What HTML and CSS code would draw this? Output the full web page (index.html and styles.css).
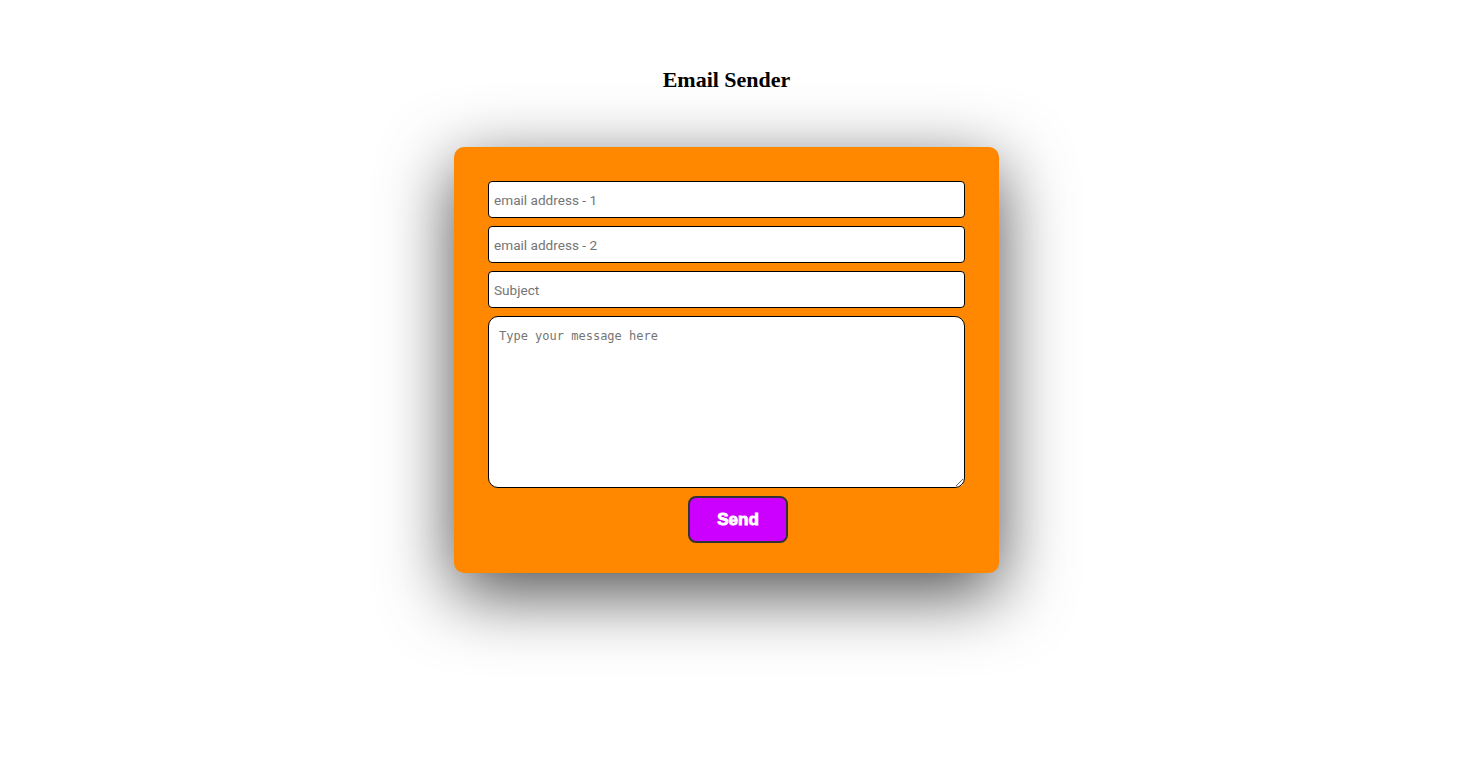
FILE: index.html
```html
<!DOCTYPE html>
<html>
<head>
<meta charset="utf-8">
<title>Email Sender</title>
<link rel="stylesheet" href="styles.css">
</head>
<body>
<div class="page">
  <h2 class="title">Email Sender</h2>
  <form class="card">
    <input class="field" type="text" placeholder="email address - 1">
    <input class="field" type="text" placeholder="email address - 2">
    <input class="field" type="text" placeholder="Subject">
    <textarea class="message" placeholder="Type your message here"></textarea>
    <button class="send" type="button">Send</button>
  </form>
</div>
</body>
</html>
```
FILE: styles.css
```css
html, body {
  margin: 0;
  padding: 0;
  background: #ffffff;
}
.page {
  width: 1453px;
  min-height: 767px;
  box-sizing: border-box;
  display: flex;
  flex-direction: column;
  align-items: center;
  padding-top: 66px;
}
.title {
  margin: 0 0 54px 0;
  font-family: "Liberation Serif", "Times New Roman", serif;
  font-weight: bold;
  font-size: 22px;
  line-height: 27px;
  color: #000;
}
.card {
  width: 545px;
  height: 426px;
  box-sizing: border-box;
  background: #ff8800;
  border-radius: 10px;
  padding: 34px 34px 30px 34px;
  display: flex;
  flex-direction: column;
  align-items: center;
  gap: 8px;
  box-shadow: 0 20px 70px rgba(0, 0, 0, 0.7);
}
.field {
  width: 477px;
  height: 37px;
  flex: none;
  box-sizing: border-box;
  border: 1px solid #000;
  border-radius: 4px;
  padding: 0 5px;
  margin: 0;
  font-family: Roboto, "Liberation Sans", sans-serif;
  font-size: 13.6px;
  background: #fff;
  outline: none;
}
.field::placeholder {
  color: #757575;
}
.message {
  width: 477px;
  height: 172px;
  flex: none;
  box-sizing: border-box;
  border: 1px solid #000;
  border-radius: 10px;
  padding: 12px 10px 10px 10px;
  margin: 0;
  font-family: "DejaVu Sans Mono", "Liberation Mono", monospace;
  font-size: 12px;
  background: #fff;
  resize: vertical;
  outline: none;
}
.message::placeholder {
  color: #757575;
}
.send {
  width: 100px;
  height: 47px;
  flex: none;
  box-sizing: border-box;
  background: #cc00ff;
  border: 2px solid #333;
  border-radius: 8px;
  color: #fff;
  font-family: "Liberation Sans", Arial, sans-serif;
  font-weight: 900;
  font-size: 17px;
  -webkit-text-stroke: 0.9px #fff;
  margin: 0 0 0 23px;
  cursor: pointer;
}
```
